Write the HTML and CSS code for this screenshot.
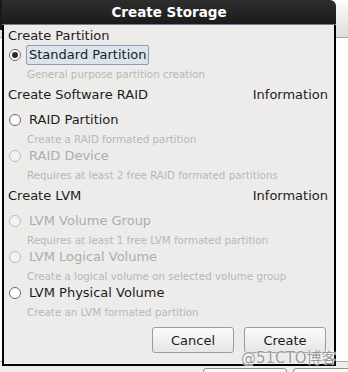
FILE: index.html
```html
<!DOCTYPE html>
<html lang="en">
<head>
    <meta charset="UTF-8">
    <meta name="viewport" content="width=device-width, initial-scale=1.0">
    <title>Create Storage</title>
    <link rel="stylesheet" href="styles.css">
</head>
<body>
    <div class="desktop">
        <!-- things behind the dialog -->
        <div class="bg-panel"></div>
        <div class="bg-corner"></div>
        <div class="bg-footer">
            <span class="bg-btn"></span>
            <span class="bg-btn"></span>
        </div>

        <div class="window">
            <div class="titlebar">Create Storage</div>
            <div class="dialog">
                <div class="section-head first">
                    <span>Create Partition</span>
                </div>
                <div class="option first">
                    <span class="radio checked"></span>
                    <span class="label focus">Standard Partition</span>
                </div>
                <p class="desc">General purpose partition creation</p>

                <div class="section-head">
                    <span>Create Software RAID</span>
                    <span>Information</span>
                </div>
                <div class="option">
                    <span class="radio"></span>
                    <span class="label">RAID Partition</span>
                </div>
                <p class="desc">Create a RAID formated partition</p>
                <div class="option disabled">
                    <span class="radio"></span>
                    <span class="label">RAID Device</span>
                </div>
                <p class="desc">Requires at least 2 free RAID formated partitions</p>

                <div class="section-head">
                    <span>Create LVM</span>
                    <span>Information</span>
                </div>
                <div class="option disabled">
                    <span class="radio"></span>
                    <span class="label">LVM Volume Group</span>
                </div>
                <p class="desc">Requires at least 1 free LVM formated partition</p>
                <div class="option disabled">
                    <span class="radio"></span>
                    <span class="label">LVM Logical Volume</span>
                </div>
                <p class="desc">Create a logical volume on selected volume group</p>
                <div class="option">
                    <span class="radio"></span>
                    <span class="label">LVM Physical Volume</span>
                </div>
                <p class="desc">Create an LVM formated partition</p>

                <div class="actions">
                    <button class="button">Cancel</button>
                    <button class="button">Create</button>
                </div>
            </div>
        </div>

        <div class="watermark">@51CTO博客</div>
    </div>
</body>
</html>
```

FILE: styles.css
```css
* {
    margin: 0;
    padding: 0;
    box-sizing: border-box;
}

body {
    font-family: 'DejaVu Sans', 'Noto Sans CJK SC', sans-serif;
    background: #ffffff;
    color: #1c1c1c;
}

.desktop {
    position: relative;
    width: 348px;
    height: 372px;
    overflow: hidden;
}

.bg-panel {
    position: absolute;
    left: 0;
    top: 0;
    width: 348px;
    height: 38px;
    background: linear-gradient(#ffffff 0%, #f4f4f4 25%, #dedede 100%);
    border-bottom: 1px solid #a8a8a8;
}

.bg-corner {
    position: absolute;
    left: 0;
    top: 0;
    width: 3px;
    height: 30px;
    background: #1a1a1a;
}

.bg-footer {
    position: absolute;
    left: 0;
    top: 361px;
    width: 348px;
    height: 11px;
    background: #eeeeec;
    border-top: 1px solid #a8a8a8;
}

.bg-btn {
    position: absolute;
    top: 6px;
    left: 203px;
    width: 84px;
    height: 20px;
    background: #fafafa;
    border: 1px solid #8e8e8e;
    border-radius: 3px;
}

.bg-btn + .bg-btn {
    left: 293px;
    width: 70px;
}

/* dialog window */
.window {
    position: absolute;
    left: 2px;
    top: 0;
    width: 334px;
}

.titlebar {
    height: 25px;
    background: linear-gradient(#2e2e2e, #1b1b1b);
    border-radius: 0 6px 0 0;
    border-bottom: 1px solid #6d7f9f;
    color: #ffffff;
    font-weight: bold;
    font-size: 13.5px;
    line-height: 24px;
    text-align: center;
}

.dialog {
    height: 341px;
    background: #edeceb;
    border: 2px solid #000000;
    border-top: none;
    padding: 3px 6px 0 2px;
    font-size: 13px;
    line-height: 16px;
}

.section-head {
    display: flex;
    justify-content: space-between;
    height: 16px;
    padding-left: 2px;
    margin-top: 5px;
}

.section-head.first {
    margin-top: 0;
}

.option {
    display: flex;
    align-items: center;
    height: 18px;
    margin-top: 8px;
    padding-left: 3px;
}

.option.first {
    margin-top: 2px;
}

.radio {
    width: 12px;
    height: 12px;
    border: 1px solid #6a6a6a;
    border-radius: 50%;
    background: #ffffff;
    display: flex;
    align-items: center;
    justify-content: center;
    margin-right: 5px;
}

.radio.checked::after {
    content: "";
    width: 6px;
    height: 6px;
    border-radius: 50%;
    background: #2a2a2a;
}

.label {
    padding: 1px 2px;
    border: 1px solid transparent;
}

.label.focus {
    background: #dbe3ec;
    border-color: #8c9eb6;
    border-radius: 2px;
}

.option.disabled .radio {
    border-color: #bdbdbb;
    background: #f2f2f1;
}

.option.disabled .label {
    color: #adadab;
}

.desc {
    height: 16px;
    margin-top: 2px;
    padding-left: 21px;
    font-size: 10.3px;
    color: #b7b7b5;
}

.option + .desc + .option {
    margin-top: 0;
}

.actions {
    display: flex;
    justify-content: flex-end;
    gap: 10px;
    margin-top: 7px;
    padding-right: 2px;
}

.button {
    width: 82px;
    height: 26px;
    font-family: inherit;
    font-size: 13px;
    color: #1c1c1c;
    background: linear-gradient(#fbfbfb, #e6e6e5);
    border: 1px solid #9b9b9b;
    border-radius: 3px;
}

.watermark {
    position: absolute;
    left: 241px;
    top: 346px;
    font-size: 15px;
    color: #9a9a9a;
    text-shadow: 0 0 1px #ffffff, 0 0 2px #ffffff;
}
```
